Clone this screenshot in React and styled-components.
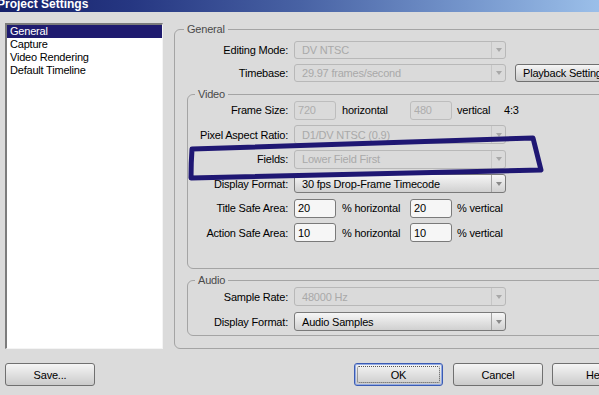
import React from "react";
import styled, { createGlobalStyle } from "styled-components";

const GlobalStyle = createGlobalStyle`
  html, body {
    margin: 0;
    padding: 0;
  }
  body {
    background: #dbdbdb;
    font-family: "Liberation Sans", Arial, sans-serif;
    font-size: 11px;
    letter-spacing: -0.2px;
  }
`;

const Window = styled.div`
  position: relative;
  width: 599px;
  height: 395px;
  overflow: hidden;
  background: #dbdbdb;
  display: flex;
  flex-direction: column;
`;

const TitleBar = styled.div`
  height: 12px;
  flex: none;
  overflow: hidden;
  background: linear-gradient(
    to right,
    #16206a 0%,
    #263782 22%,
    #4862a4 50%,
    #7596cc 78%,
    #9bbfe9 100%
  );
`;

const Title = styled.div`
  margin: -2px 0 0 -3px;
  color: #fff;
  font-weight: bold;
  font-size: 12px;
  line-height: 12px;
  letter-spacing: 0;
  white-space: nowrap;
`;

const Main = styled.div`
  display: flex;
  align-items: flex-start;
  padding: 11px 0 0 5px;
`;

const List = styled.ul`
  box-sizing: border-box;
  flex: none;
  width: 158px;
  height: 326px;
  margin: 0;
  padding: 0;
  list-style: none;
  background: #fff;
  border-style: solid;
  border-width: 2px 1px 1px 2px;
  border-color: #7c7c7c #f4f4f4 #f4f4f4 #7c7c7c;
`;

const Item = styled.li`
  height: 13px;
  line-height: 13px;
  padding-left: 3px;
  color: ${(p) => (p.$selected ? "#fff" : "#000")};
  background: ${(p) => (p.$selected ? "#1f1b6f" : "transparent")};
  white-space: nowrap;
`;

const Group = styled.fieldset`
  box-sizing: border-box;
  min-width: 0;
  margin: ${(p) => p.$margin || "0"};
  padding: ${(p) => p.$padding || "0"};
  border: 1px solid #a4a4a4;
  border-radius: 6px;
  flex: ${(p) => (p.$grow ? 1 : "none")};
`;

const Legend = styled.legend`
  padding: 0 3px;
  margin: 0;
  line-height: 13px;
  font-size: 11px;
  color: #4a4a4a;
`;

const Rows = styled.div`
  display: grid;
  grid-template-columns: ${(p) => p.$label}px 212px auto;
  grid-auto-rows: ${(p) => p.$row}px;
  column-gap: 6px;
  row-gap: ${(p) => p.$gap}px;
  align-items: center;
`;

const Label = styled.div`
  grid-column: 1;
  justify-self: end;
  white-space: nowrap;
  color: #000;
`;

const SelectBox = styled.div`
  grid-column: 2;
  box-sizing: border-box;
  width: 212px;
  height: 100%;
  display: flex;
  align-items: stretch;
  border: 1px solid ${(p) => (p.$disabled ? "#b8b8b8" : "#7a7a7a")};
  border-radius: 3px;
  background: ${(p) =>
    p.$disabled ? "#dadada" : "linear-gradient(#f6f6f6, #d0d0d0)"};
  color: ${(p) => (p.$disabled ? "#a9a9a9" : "#000")};
`;

const SelectValue = styled.div`
  flex: 1;
  display: flex;
  align-items: center;
  padding-left: 7px;
  white-space: nowrap;
  overflow: hidden;
`;

const ArrowCell = styled.div`
  width: 13px;
  display: flex;
  align-items: center;
  justify-content: center;
  border-left: 1px solid ${(p) => (p.$disabled ? "#c6c6c6" : "#a2a2a2")};
`;

const Arrow = styled.span`
  width: 0;
  height: 0;
  border-left: 3px solid transparent;
  border-right: 3px solid transparent;
  border-top: 4px solid ${(p) => (p.$disabled ? "#a8a8a8" : "#8a8a8a")};
`;

const Pair = styled.div`
  grid-column: 2 / span 2;
  height: 100%;
  display: grid;
  grid-template-columns: 42px 74px 42px 47px auto;
  align-items: center;
`;

const Field = styled.input`
  box-sizing: border-box;
  width: 42px;
  height: 100%;
  margin: 0;
  padding: 0 0 0 3px;
  font: inherit;
  letter-spacing: inherit;
  border: 1px solid ${(p) => (p.disabled ? "#bdbdbd" : "#7a7a7a")};
  border-radius: 3px;
  background: ${(p) => (p.disabled ? "#dadada" : "#f6f6f6")};
  color: ${(p) => (p.disabled ? "#adadad" : "#000")};
  outline: none;
`;

const Unit = styled.span`
  padding-left: ${(p) => p.$pad || 6}px;
  white-space: nowrap;
  color: #000;
`;

const Button = styled.button`
  box-sizing: border-box;
  position: relative;
  width: ${(p) => p.$width || 90}px;
  height: ${(p) => p.$height || 23}px;
  margin: 0;
  padding: ${(p) => (p.$left ? "0 0 0 7px" : "0")};
  text-align: ${(p) => (p.$left ? "left" : "center")};
  font: inherit;
  letter-spacing: inherit;
  color: #000;
  white-space: nowrap;
  border: 1px solid ${(p) => (p.$focus ? "#3b5bb3" : "#707070")};
  border-radius: 3px;
  background: linear-gradient(#f5f5f5, #cbcbcb);
  box-shadow: ${(p) => (p.$focus ? "inset 0 0 0 1px #93abe3" : "none")};

  &::after {
    content: "";
    display: ${(p) => (p.$focus ? "block" : "none")};
    position: absolute;
    inset: 2px;
    border: 1px dotted #555;
    border-radius: 2px;
  }
`;

const PlaybackButton = styled(Button)`
  grid-column: 3;
  margin-left: 3px;
  height: 100%;
`;

const Footer = styled.div`
  box-sizing: border-box;
  width: 647px;
  display: flex;
  justify-content: space-between;
  padding: 14px 5px 0 5px;
`;

const ButtonGroup = styled.div`
  display: flex;
  gap: 10px;
`;

const Marker = styled.svg`
  position: absolute;
  left: 0;
  top: 0;
  pointer-events: none;
`;

const Select = ({ value, disabled }) => (
  <SelectBox $disabled={disabled}>
    <SelectValue>{value}</SelectValue>
    <ArrowCell $disabled={disabled}>
      <Arrow $disabled={disabled} />
    </ArrowCell>
  </SelectBox>
);

const pages = ["General", "Capture", "Video Rendering", "Default Timeline"];

export default function App() {
  return (
    <>
      <GlobalStyle />
      <Window>
        <TitleBar>
          <Title>Project Settings</Title>
        </TitleBar>
        <Main>
          <List>
            {pages.map((p, i) => (
              <Item key={p} $selected={i === 0}>
                {p}
              </Item>
            ))}
          </List>
          <Group $grow $margin="0 -40px 0 11px" $padding="5px 0 12px 9px">
            <Legend>General</Legend>
            <Rows $label={104} $row={18} $gap={5}>
              <Label>Editing Mode:</Label>
              <Select value="DV NTSC" disabled />
              <Label>Timebase:</Label>
              <Select value="29.97 frames/second" disabled />
              <PlaybackButton $left $width={110}>
                Playback Settings...
              </PlaybackButton>
            </Rows>
            <Group $margin="5.5px 0 0 3px" $padding="0 0 26px 7px">
              <Legend>Video</Legend>
              <Rows $label={93} $row={19} $gap={5.5}>
                <Label>Frame Size:</Label>
                <Pair>
                  <Field disabled readOnly value="720" />
                  <Unit>horizontal</Unit>
                  <Field disabled readOnly value="480" />
                  <Unit $pad={5}>vertical</Unit>
                  <Unit $pad={5}>4:3</Unit>
                </Pair>
                <Label>Pixel Aspect Ratio:</Label>
                <Select value="D1/DV NTSC (0.9)" disabled />
                <Label>Fields:</Label>
                <Select value="Lower Field First" disabled />
                <Label>Display Format:</Label>
                <Select value="30 fps Drop-Frame Timecode" />
                <Label>Title Safe Area:</Label>
                <Pair>
                  <Field readOnly value="20" />
                  <Unit>% horizontal</Unit>
                  <Field readOnly value="20" />
                  <Unit $pad={5}>% vertical</Unit>
                </Pair>
                <Label>Action Safe Area:</Label>
                <Pair>
                  <Field readOnly value="10" />
                  <Unit>% horizontal</Unit>
                  <Field readOnly value="10" />
                  <Unit $pad={5}>% vertical</Unit>
                </Pair>
              </Rows>
            </Group>
            <Group $margin="5px 0 0 3px" $padding="0 0 4px 7px">
              <Legend>Audio</Legend>
              <Rows $label={93} $row={19} $gap={6}>
                <Label>Sample Rate:</Label>
                <Select value="48000 Hz" disabled />
                <Label>Display Format:</Label>
                <Select value="Audio Samples" />
              </Rows>
            </Group>
          </Group>
        </Main>
        <Footer>
          <Button>Save...</Button>
          <ButtonGroup>
            <Button $focus $width={89}>
              OK
            </Button>
            <Button>Cancel</Button>
            <Button style={{ marginLeft: -1 }}>Help</Button>
          </ButtonGroup>
        </Footer>
        <Marker width="599" height="395" viewBox="0 0 599 395">
          <path
            d="M192 149 Q360 143 533 138 Q537 154 541 170 Q365 174 191 178 Q191 163 192 149 Z"
            fill="none"
            stroke="#1f1773"
            strokeWidth="5"
            strokeLinejoin="round"
          />
        </Marker>
      </Window>
    </>
  );
}
